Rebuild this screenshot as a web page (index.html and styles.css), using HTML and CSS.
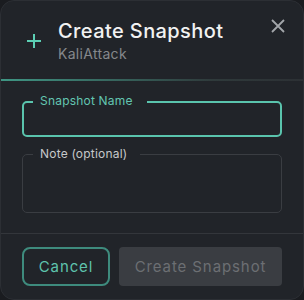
FILE: index.html
```html
<!DOCTYPE html>
<html>
<head>
<meta charset="utf-8">
<link rel="stylesheet" href="styles.css">
</head>
<body>
<div class="dialog">
  <div class="header">
    <svg class="plus" width="16" height="16" viewBox="0 0 16 16"><path d="M8 1v14M1 8h14" stroke="#5ccfb4" stroke-width="2" fill="none"/></svg>
    <div class="titles">
      <div class="title">Create Snapshot</div>
      <div class="subtitle">KaliAttack</div>
    </div>
    <svg class="close" width="16" height="16" viewBox="0 0 16 16"><path d="M2 2l12 12M14 2L2 14" stroke="#a3a6aa" stroke-width="1.8" fill="none"/></svg>
  </div>
  <div class="divider"></div>
  <div class="body">
    <div class="field field-active">
      <span class="field-label label-active">Snapshot Name</span>
    </div>
    <div class="field field-note">
      <span class="field-label label-note">Note (optional)</span>
    </div>
  </div>
  <div class="footer">
    <button class="btn btn-cancel">Cancel</button>
    <button class="btn btn-create">Create Snapshot</button>
  </div>
</div>
</body>
</html>
```
FILE: styles.css
```css
* { box-sizing: border-box; }
html, body { margin: 0; padding: 0; }
body {
  background: #1a1c20;
  font-family: Inter, "Noto Sans", sans-serif;
}
.dialog {
  width: 304px;
  height: 300px;
  background: #212429;
  border: 1px solid #2c2f34;
  border-radius: 14px;
  display: flex;
  flex-direction: column;
  overflow: hidden;
}
.header {
  display: flex;
  align-items: flex-start;
  padding: 18px 17px 15px 25px;
  height: 78px;
}
.plus {
  margin-top: 14px;
  flex: none;
}
.titles {
  flex: 1;
  margin-left: 16px;
}
.title {
  color: #f2f2f2;
  font-size: 20px;
  font-weight: 500;
  line-height: 24px;
  letter-spacing: 0.4px;
}
.subtitle {
  color: #85888c;
  font-size: 14px;
  line-height: 18px;
  margin-top: 2px;
  letter-spacing: 0.3px;
}
.close {
  flex: none;
  margin-top: -1px;
}
.divider {
  height: 2px;
  background: linear-gradient(to right, #3f9684, #2f3a3b 70%, #2c3034);
}
.body {
  padding: 20px 21px 20px 21px;
  display: flex;
  flex-direction: column;
  gap: 17px;
  border-bottom: 1px solid #33363b;
}
.field {
  position: relative;
  border-radius: 5px;
}
.field-active {
  height: 36px;
  border: 2px solid #5ac4ad;
}
.field-note {
  height: 59px;
  border: 1px solid #3a3d42;
}
.field-label {
  position: absolute;
  left: 9px;
  top: -9px;
  font-size: 12px;
  line-height: 14px;
  background: #212429;
  padding: 0 14px 0 7px;
  letter-spacing: 0.2px;
}
.label-active { color: #63c6b1; }
.label-note { color: #c6c8ca; left: 10px; top: -8px; padding-right: 13px; }
.footer {
  display: flex;
  gap: 9px;
  padding: 13px 21px 13px 21px;
}
.btn {
  font-family: inherit;
  font-size: 15px;
  letter-spacing: 0.9px;
  height: 39px;
  border-radius: 8px;
  cursor: pointer;
}
.btn-cancel {
  width: 88px;
  background: transparent;
  border: 2px solid #3e8b7d;
  color: #5ec3ad;
}
.btn-create {
  flex: 1;
  background: #3a3d42;
  border: none;
  border-radius: 4px;
  color: #6c6f73;
}
```
